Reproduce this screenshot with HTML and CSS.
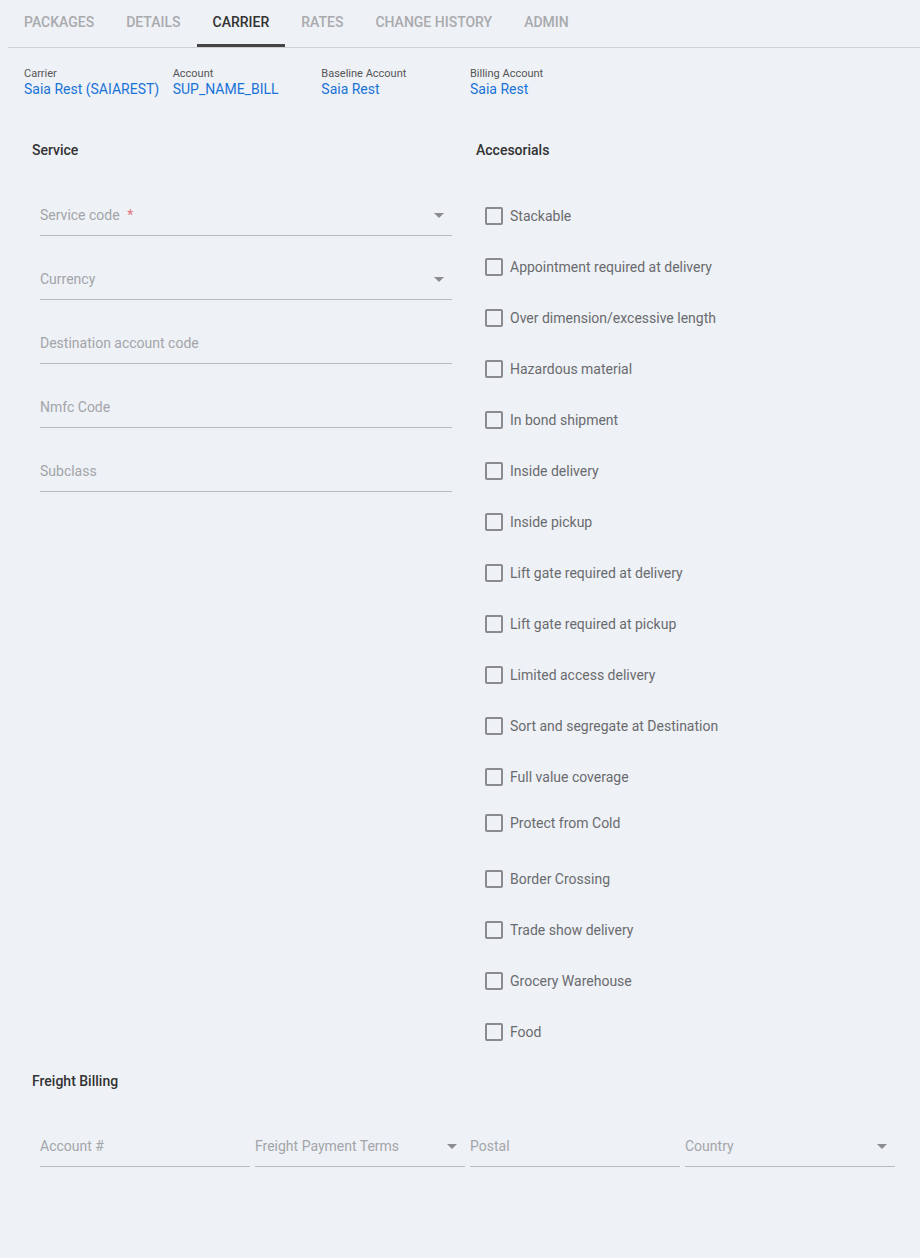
FILE: index.html
```html
<!DOCTYPE html>
<html>
<head>
<meta charset="utf-8">
<link rel="stylesheet" href="styles.css">
</head>
<body>
<div class="page">
  <nav class="tabs">
    <div class="tab">PACKAGES</div>
    <div class="tab">DETAILS</div>
    <div class="tab active">CARRIER</div>
    <div class="tab">RATES</div>
    <div class="tab">CHANGE HISTORY</div>
    <div class="tab">ADMIN</div>
  </nav>
  <div class="content">
    <div class="info">
      <div class="info-item"><div class="info-label">Carrier</div><div class="info-value">Saia Rest (SAIAREST)</div></div>
      <div class="info-item"><div class="info-label">Account</div><div class="info-value">SUP_NAME_BILL</div></div>
      <div class="info-item"><div class="info-label">Baseline Account</div><div class="info-value">Saia Rest</div></div>
      <div class="info-item"><div class="info-label">Billing Account</div><div class="info-value">Saia Rest</div></div>
    </div>
    <div class="cols">
      <section class="col">
        <h3 class="heading">Service</h3>
        <div class="fields">
          <div class="field select"><span class="label">Service code <span class="req">*</span></span><span class="arrow"></span></div>
          <div class="field select"><span class="label">Currency</span><span class="arrow"></span></div>
          <div class="field"><span class="label">Destination account code</span></div>
          <div class="field"><span class="label">Nmfc Code</span></div>
          <div class="field"><span class="label">Subclass</span></div>
        </div>
      </section>
      <section class="col">
        <h3 class="heading">Accesorials</h3>
        <div class="checks">
          <label class="check"><span class="box"></span>Stackable</label>
          <label class="check"><span class="box"></span>Appointment required at delivery</label>
          <label class="check"><span class="box"></span>Over dimension/excessive length</label>
          <label class="check"><span class="box"></span>Hazardous material</label>
          <label class="check"><span class="box"></span>In bond shipment</label>
          <label class="check"><span class="box"></span>Inside delivery</label>
          <label class="check"><span class="box"></span>Inside pickup</label>
          <label class="check"><span class="box"></span>Lift gate required at delivery</label>
          <label class="check"><span class="box"></span>Lift gate required at pickup</label>
          <label class="check"><span class="box"></span>Limited access delivery</label>
          <label class="check"><span class="box"></span>Sort and segregate at Destination</label>
          <label class="check"><span class="box"></span>Full value coverage</label>
          <label class="check short"><span class="box"></span>Protect from Cold</label>
          <label class="check tall"><span class="box"></span>Border Crossing</label>
          <label class="check"><span class="box"></span>Trade show delivery</label>
          <label class="check"><span class="box"></span>Grocery Warehouse</label>
          <label class="check"><span class="box"></span>Food</label>
        </div>
      </section>
    </div>
    <section class="billing">
      <h3 class="heading">Freight Billing</h3>
      <div class="billing-row">
        <div class="field"><span class="label">Account #</span></div>
        <div class="field select"><span class="label">Freight Payment Terms</span><span class="arrow"></span></div>
        <div class="field"><span class="label">Postal</span></div>
        <div class="field select"><span class="label">Country</span><span class="arrow"></span></div>
      </div>
    </section>
  </div>
</div>
</body>
</html>
```

FILE: styles.css
```css
* { box-sizing: border-box; }
html, body {
  margin: 0;
  padding: 0;
  background: #eef1f6;
  font-family: Roboto, "Liberation Sans", Arial, sans-serif;
  color: #333;
}
.page {
  width: 920px;
  min-height: 1258px;
  padding-left: 8px;
}
.tabs {
  display: flex;
  border-bottom: 1px solid #cfd1d5;
  height: 48px;
}
.tab {
  padding: 0 16px;
  height: 47px;
  line-height: 44px;
  font-size: 14px;
  font-weight: 500;
  color: #a9aaad;
  border-bottom: 3px solid transparent;
  margin-bottom: -1px;
}
.tab.active {
  color: #333;
  border-bottom-color: #444;
}
.content {
  padding: 0 8px 0 16px;
}
.info {
  display: flex;
  padding-top: 19px;
}
.info-item {
  width: 148.67px;
}
.info-label {
  font-size: 11px;
  line-height: 14px;
  color: #555;
}
.info-value {
  font-size: 14px;
  line-height: 16px;
  color: #1a73d6;
}
.cols {
  display: grid;
  grid-template-columns: 444px 444px;
  margin-top: 43px;
}
.heading {
  margin: 0;
  padding-left: 8px;
  font-size: 14px;
  line-height: 20px;
  font-weight: 500;
  color: #333;
}
.fields {
  padding: 45px 16px 0;
  display: flex;
  flex-direction: column;
  gap: 33px;
}
.field {
  position: relative;
  height: 31px;
  border-bottom: 1px solid #b9bbbf;
  font-size: 14px;
  line-height: 20px;
  color: #a3a5a9;
}
.req {
  color: #e5737a;
  margin-left: 4px;
}
.arrow {
  position: absolute;
  right: 8px;
  top: 8px;
  width: 0;
  height: 0;
  border-left: 5px solid transparent;
  border-right: 5px solid transparent;
  border-top: 5px solid #8a8c90;
}
.checks {
  padding: 30px 0 0 17px;
  display: flex;
  flex-direction: column;
}
.check {
  display: flex;
  align-items: center;
  height: 51px;
  font-size: 14px;
  color: #6a6b6e;
}
.check.short { margin-top: -5px; }
.check.tall { margin-top: 5px; }
.box {
  width: 18px;
  height: 18px;
  border: 2px solid #8a8b8e;
  border-radius: 2px;
  margin-right: 7px;
  flex: none;
}
.billing {
  margin-top: 14px;
}
.billing-row {
  display: flex;
  gap: 5px;
  padding: 45px 0 0 16px;
}
.billing-row .field {
  width: 210px;
}
```
